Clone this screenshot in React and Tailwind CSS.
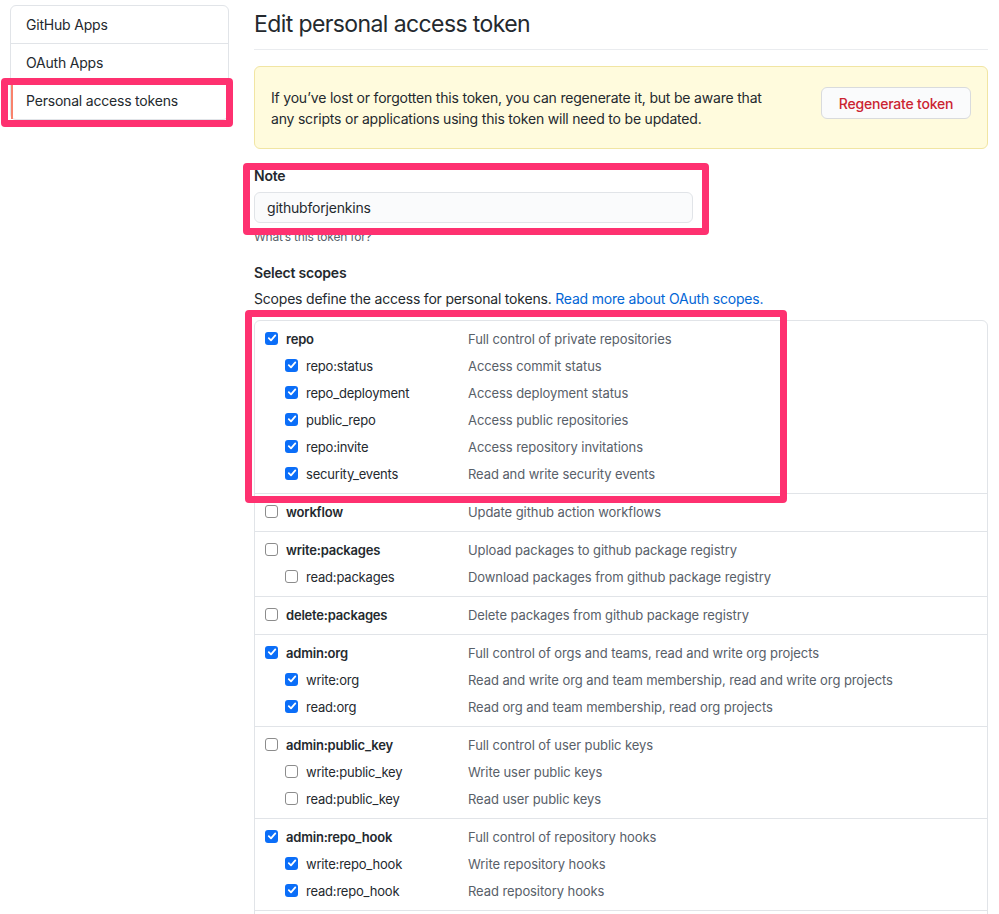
import React from "react";

const groups = [
  [
    { name: "repo", desc: "Full control of private repositories", checked: true },
    { name: "repo:status", desc: "Access commit status", checked: true, sub: true },
    { name: "repo_deployment", desc: "Access deployment status", checked: true, sub: true },
    { name: "public_repo", desc: "Access public repositories", checked: true, sub: true },
    { name: "repo:invite", desc: "Access repository invitations", checked: true, sub: true },
    { name: "security_events", desc: "Read and write security events", checked: true, sub: true },
  ],
  [{ name: "workflow", desc: "Update github action workflows", checked: false }],
  [
    { name: "write:packages", desc: "Upload packages to github package registry", checked: false },
    { name: "read:packages", desc: "Download packages from github package registry", checked: false, sub: true },
  ],
  [{ name: "delete:packages", desc: "Delete packages from github package registry", checked: false }],
  [
    { name: "admin:org", desc: "Full control of orgs and teams, read and write org projects", checked: true },
    { name: "write:org", desc: "Read and write org and team membership, read and write org projects", checked: true, sub: true },
    { name: "read:org", desc: "Read org and team membership, read org projects", checked: true, sub: true },
  ],
  [
    { name: "admin:public_key", desc: "Full control of user public keys", checked: false },
    { name: "write:public_key", desc: "Write user public keys", checked: false, sub: true },
    { name: "read:public_key", desc: "Read user public keys", checked: false, sub: true },
  ],
  [
    { name: "admin:repo_hook", desc: "Full control of repository hooks", checked: true },
    { name: "write:repo_hook", desc: "Write repository hooks", checked: true, sub: true },
    { name: "read:repo_hook", desc: "Read repository hooks", checked: true, sub: true },
  ],
];

function Checkbox({ checked }) {
  if (checked) {
    return (
      <span className="flex h-[13px] w-[13px] shrink-0 items-center justify-center rounded-[3px] bg-[#0b6ef8]">
        <svg width="10" height="10" viewBox="0 0 10 10" fill="none">
          <path d="M1.8 5.2 L4 7.3 L8.3 2.4" stroke="white" strokeWidth="1.8" strokeLinecap="round" strokeLinejoin="round" />
        </svg>
      </span>
    );
  }
  return <span className="block h-[13px] w-[13px] shrink-0 rounded-[3px] border border-[#8c8c8c] bg-white" />;
}

function Row({ item }) {
  return (
    <div className="flex h-[27px] items-center">
      <div className={`flex w-[203px] shrink-0 items-center gap-[8px] ${item.sub ? "pl-[20px]" : ""}`}>
        <span className="-mt-[3px] flex">
          <Checkbox checked={item.checked} />
        </span>
        <span className={`text-[13px] text-[#24292e] ${item.sub ? "" : "font-semibold"}`}>{item.name}</span>
      </div>
      <span className="text-[13px] tracking-[-0.08px] text-[#586069]">{item.desc}</span>
    </div>
  );
}

export default function App() {
  return (
    <div
      className="relative h-[914px] w-[999px] overflow-hidden bg-white text-[14px] tracking-[-0.2px] text-[#24292e]"
      style={{ fontFamily: "Inter, 'Liberation Sans', sans-serif" }}
    >
      <div className="flex gap-[25px] pl-[10px]">
        {/* Sidebar */}
        <div className="mt-[5px] w-[219px] shrink-0">
          <div className="rounded-[6px] border border-[#e1e4e8]">
            <div className="border-b border-[#e1e4e8] px-[15px] py-[8px] leading-[21px]">GitHub Apps</div>
            <div className="border-b border-[#e1e4e8] px-[15px] py-[8px] leading-[21px]">OAuth Apps</div>
            <div className="border-l-2 border-[#f9826c] px-[13px] py-[8px] leading-[21px]">Personal access tokens</div>
          </div>
        </div>

        {/* Main */}
        <div className="w-[734px] shrink-0 pt-[6px]">
          <div className="border-b border-[#eaecef] pb-[7px] text-[23px] leading-[36px] tracking-[-0.6px] text-[#24292e]">
            Edit personal access token
          </div>

          <div className="mt-[16px] flex items-start justify-between rounded-[6px] border border-[#f1e5a3] bg-[#fffbdd] px-[16px] pt-[20px] pb-[19px]">
            <p className="leading-[21px]">
              If you’ve lost or forgotten this token, you can regenerate it, but be aware that
              <br />
              any scripts or applications using this token will need to be updated.
            </p>
            <button className="flex h-[32px] w-[150px] items-center justify-center rounded-[6px] border border-[#d9dbdd] bg-[#fafbfc] font-medium text-[#cb2431]">
              Regenerate token
            </button>
          </div>

          <div className="mt-[16px] font-semibold leading-[21px]">Note</div>
          <div className="mt-[6px] flex h-[31px] w-[439px] items-center rounded-[6px] border border-[#e1e4e8] bg-[#fafbfc] px-[12px]">
            githubforjenkins
          </div>
          <div className="mt-[5px] text-[12px] leading-[18px] text-[#586069]">What’s this token for?</div>

          <div className="mt-[16px] font-semibold leading-[21px]">Select scopes</div>
          <div className="mt-[5px] leading-[21px]">
            Scopes define the access for personal tokens.{" "}
            <span className="text-[#0366d6]">Read more about OAuth scopes.</span>
          </div>

          <div className="mt-[11px] h-[600px] rounded-[6px] border border-[#e1e4e8]">
            {groups.map((g, i) => (
              <div
                key={i}
                className={`px-[10px] py-[5px] ${i > 0 ? "border-t border-[#e1e4e8]" : ""} ${
                  i === groups.length - 1 ? "border-b" : ""
                }`}
              >
                {g.map((item) => (
                  <Row key={item.name} item={item} />
                ))}
              </div>
            ))}
          </div>
        </div>
      </div>

      {/* Annotation boxes */}
      <div className="absolute left-[1px] top-[78px] h-[49px] w-[232px] rounded-[4px] border-[7px] border-[#fe3170]" />
      <div className="absolute left-[243px] top-[163px] h-[72px] w-[466px] rounded-[4px] border-[7px] border-[#fe3170]" />
      <div className="absolute left-[245px] top-[310px] h-[193px] w-[542px] rounded-[4px] border-[7px] border-[#fe3170]" />
    </div>
  );
}
